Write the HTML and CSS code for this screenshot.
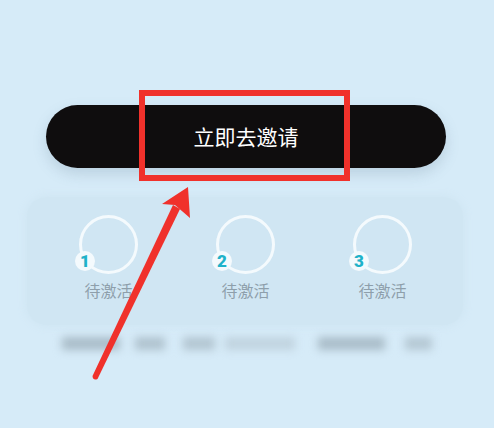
FILE: index.html
```html
<!DOCTYPE html>
<html lang="zh-CN">
<head>
    <meta charset="UTF-8">
    <meta name="viewport" content="width=device-width, initial-scale=1.0">
    <title>立即去邀请</title>
    <link rel="stylesheet" href="styles.css">
</head>
<body>
    <div class="page">
        <div class="invite-btn">立即去邀请</div>

        <div class="panel">
            <div class="slot">
                <div class="ring"><span class="badge">1</span></div>
                <div class="slot-label">待激活</div>
            </div>
            <div class="slot">
                <div class="ring"><span class="badge">2</span></div>
                <div class="slot-label">待激活</div>
            </div>
            <div class="slot">
                <div class="ring"><span class="badge">3</span></div>
                <div class="slot-label">待激活</div>
            </div>
        </div>

        <div class="blurred-note">
            <span class="blur-bar bar-a"></span>
            <span class="blur-bar bar-b"></span>
            <span class="blur-bar bar-c"></span>
            <span class="blur-bar bar-d"></span>
            <span class="blur-bar bar-e"></span>
            <span class="blur-bar bar-f"></span>
        </div>

        <!-- red annotation over the screenshot -->
        <div class="mark-box"></div>
        <svg class="mark-arrow" width="494" height="428" viewBox="0 0 494 428">
            <path d="M92.500 376 L173 205 L180 209 L97.500 379 Q93 381 92.500 376 Z" fill="#f0312b"/>
            <path d="M188 187 L162 204 L175 205 L190 218 Z" fill="#f0312b"/>
        </svg>
    </div>
</body>
</html>
```

FILE: styles.css
```css
* {
    margin: 0;
    padding: 0;
    box-sizing: border-box;
}

body {
    background-color: #d6ebf8;
    font-family: "Noto Sans CJK SC", "Liberation Sans", sans-serif;
}

.page {
    position: relative;
    width: 494px;
    height: 428px;
    overflow: hidden;
    padding-top: 105px;
}

.invite-btn {
    width: 400px;
    height: 63px;
    margin-left: 46px;
    border-radius: 32px;
    background-color: #0f0d0e;
    color: #fff;
    font-size: 21px;
    line-height: 63px;
    text-align: center;
    box-shadow: 0 6px 14px rgba(90, 120, 140, 0.22);
}

.panel {
    display: grid;
    grid-template-columns: repeat(3, 137px);
    width: 436px;
    height: 128px;
    margin: 29px 0 0 27px;
    padding: 18px 13px 0;
    border-radius: 20px;
    background-color: #d0e6f3;
    box-shadow: 0 0 8px 2px #d0e6f3;
}

.slot {
    display: flex;
    flex-direction: column;
    align-items: center;
}

.ring {
    position: relative;
    width: 59px;
    height: 59px;
    border: 3px solid #f4fafd;
    border-radius: 50%;
}

.badge {
    position: absolute;
    left: -7px;
    top: 33px;
    width: 20px;
    height: 20px;
    border-radius: 50%;
    background-color: #f4fafd;
    color: #1fb2c9;
    font-family: "Roboto", sans-serif;
    font-size: 17px;
    font-weight: 900;
    line-height: 20px;
    text-align: center;
}

.slot-label {
    margin-top: 4px;
    color: #8e9fab;
    font-size: 16px;
    line-height: 24px;
}

.blurred-note {
    display: flex;
    height: 13px;
    margin: 12px 0 0 62px;
    filter: blur(4px);
}

.blur-bar {
    height: 13px;
    background-color: #a9bcc8;
}

.bar-a { width: 58px; }
.bar-b { width: 30px; margin-left: 15px; background-color: #afc2ce; }
.bar-c { width: 32px; margin-left: 18px; background-color: #b2c5d1; }
.bar-d { width: 70px; margin-left: 10px; background-color: #c0d3df; }
.bar-e { width: 67px; margin-left: 23px; }
.bar-f { width: 27px; margin-left: 20px; background-color: #b4c7d3; }

.mark-box {
    position: absolute;
    left: 139px;
    top: 90px;
    width: 211px;
    height: 91px;
    border: 6px solid #f0312b;
}

.mark-arrow {
    position: absolute;
    left: 0;
    top: 0;
}
```
